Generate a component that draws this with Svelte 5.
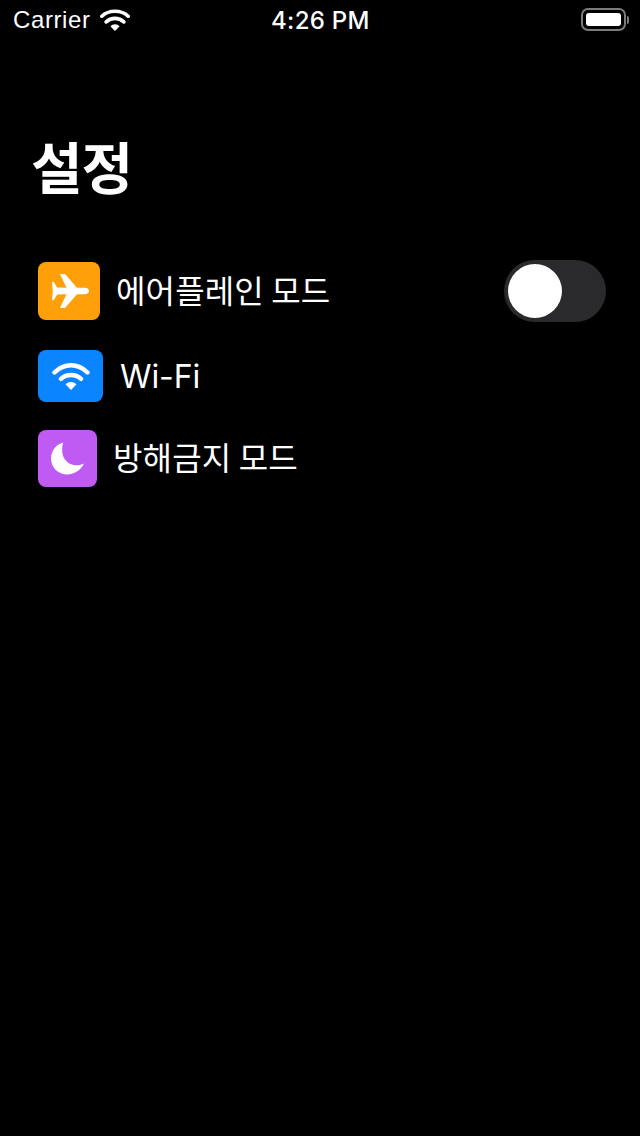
<script lang="ts">
  const rows = [
    { id: 'airplane', label: '에어플레인 모드', toggle: true },
    { id: 'wifi', label: 'Wi-Fi', toggle: false },
    { id: 'moon', label: '방해금지 모드', toggle: false },
  ];
</script>

<div class="screen">
  <div class="status">
    <div class="status-left">
      <span class="carrier">Carrier</span>
      <svg class="status-wifi" viewBox="0 0 30 22" aria-hidden="true">
        <path d="M15 22l-4.600-4.800a6.600 6.600 0 0 1 9.200 0z" fill="#fff" />
        <path d="M15 2.200C9.600 2.200 4.800 4.300 1.800 7.200M15 9.400c-3.400 0-6.500 1.300-8.800 3.500M15 2.200c5.400 0 10.200 2.100 13.200 5M15 9.400c3.400 0 6.500 1.300 8.800 3.500" fill="none" stroke="#fff" stroke-width="3.600" stroke-linecap="round" />
      </svg>
    </div>
    <span class="clock">4:26 PM</span>
    <div class="battery">
      <div class="battery-body"><div class="battery-fill"></div></div>
      <div class="battery-cap"></div>
    </div>
  </div>

  <h1 class="title">설정</h1>

  <div class="list">
    {#each rows as row}
      <div class="row">
        <div class="icon icon-{row.id}">
          {#if row.id === 'airplane'}
            <svg class="plane" viewBox="0 0 37 34" aria-hidden="true">
              <path d="M0 8h1.800l3.400 5.500 9.300.3L8 0h5l12 13.800h8c2.300 0 4 1.400 4 3.200s-1.700 3.200-4 3.200h-8L13 34H8l6.500-13.800-9.300.3L1.800 26H0l.8-9z" fill="#fff" />
            </svg>
          {:else if row.id === 'wifi'}
            <svg class="wifi" viewBox="0 0 38 27" aria-hidden="true">
              <path d="M19 27l-5.500-5.700a7.800 7.800 0 0 1 11 0z" fill="#fff" />
              <path d="M2.500 9.500C7 5 12.500 2.300 19 2.300s12 2.700 16.500 7.200M9 15.800c2.700-2.400 6-3.800 10-3.800s7.300 1.400 10 3.800" fill="none" stroke="#fff" stroke-width="4.400" stroke-linecap="round" />
            </svg>
          {:else}
            <svg class="moon" viewBox="0 0 34 33" aria-hidden="true">
              <path d="M12.500 0C5 2 0 8.800 0 16.500 0 25.800 7.500 33 16.800 33 24.500 33 31 28 34 21.700 31.500 23 29.500 23.500 26.500 23.500 18 23.500 11.500 17 11.500 8.500c0-3 .3-5.500 1-8.500z" fill="#fff" />
            </svg>
          {/if}
        </div>
        <span class="label label-{row.id}">{row.label}</span>
        {#if row.toggle}
          <div class="toggle"><div class="knob"></div></div>
        {/if}
      </div>
    {/each}
  </div>
</div>

<style>
  :global(body) {
    margin: 0;
    background: #000;
  }

  .screen {
    width: 640px;
    height: 1136px;
    background: #000;
    color: #fff;
    overflow: hidden;
    font-family: "Noto Sans CJK KR", "Liberation Sans", sans-serif;
  }

  /* status bar */
  .status {
    position: relative;
    display: flex;
    align-items: center;
    justify-content: space-between;
    height: 40px;
    padding: 0 11px 0 13px;
    font-family: "Inter", "Liberation Sans", Arial, sans-serif;
  }
  .status-left {
    display: flex;
    align-items: center;
    gap: 9px;
  }
  .carrier {
    font-family: "Liberation Sans", Arial, sans-serif;
    letter-spacing: 0.6px;
    font-size: 24px;
  }
  .status-wifi {
    width: 30px;
    height: 22px;
  }
  .clock {
    position: absolute;
    left: 271px;
    top: 6px;
    font-weight: 500;
    font-size: 24px;
    letter-spacing: 0.3px;
    line-height: 30px;
  }
  .battery {
    display: flex;
    align-items: center;
    gap: 1px;
    margin-bottom: 1px;
  }
  .battery-body {
    box-sizing: border-box;
    width: 45px;
    height: 23px;
    padding: 3px;
    border: 2px solid #7b7b7b;
    border-radius: 7px;
  }
  .battery-fill {
    height: 100%;
    background: #fff;
    border-radius: 3px;
  }
  .battery-cap {
    width: 2px;
    height: 8px;
    background: #7b7b7b;
    border-radius: 0 2px 2px 0;
  }

  .title {
    margin: 85px 0 0 31px;
    font-size: 56px;
    font-weight: 700;
    line-height: 80px;
    letter-spacing: -1px;
  }

  /* rows */
  .list {
    display: flex;
    flex-direction: column;
    gap: 28px;
    margin-top: 55px;
    padding: 0 34px 0 38px;
  }
  .row {
    display: flex;
    align-items: center;
  }
  .icon {
    display: flex;
    align-items: center;
    justify-content: center;
    flex-shrink: 0;
    border-radius: 8px;
  }
  .icon-airplane {
    width: 62px;
    height: 58px;
    background: #ff9f0a;
  }
  .icon-wifi {
    width: 65px;
    height: 52px;
    background: #0a84ff;
  }
  .icon-moon {
    width: 59px;
    height: 57px;
    background: #bf5af2;
  }
  .plane {
    width: 37px;
    height: 34px;
    margin-left: 2px;
  }
  .wifi {
    width: 38px;
    height: 27px;
  }
  .moon {
    width: 33px;
    height: 33px;
  }

  .label {
    font-size: 32px;
    line-height: 44px;
    letter-spacing: 0.15px;
    margin-bottom: 5px;
  }
  .label-airplane {
    margin-left: 16px;
  }
  .label-wifi {
    margin-left: 17px;
    margin-bottom: 0;
    margin-top: 2px;
    font-family: "Inter", "Liberation Sans", sans-serif;
    letter-spacing: -0.1px;
  }
  .label-moon {
    margin-left: 16px;
  }

  .toggle {
    box-sizing: border-box;
    width: 102px;
    height: 62px;
    margin-left: auto;
    padding: 4px;
    background: #2a2a2c;
    border-radius: 31px;
  }
  .knob {
    width: 54px;
    height: 54px;
    background: #fff;
    border-radius: 50%;
  }
</style>
